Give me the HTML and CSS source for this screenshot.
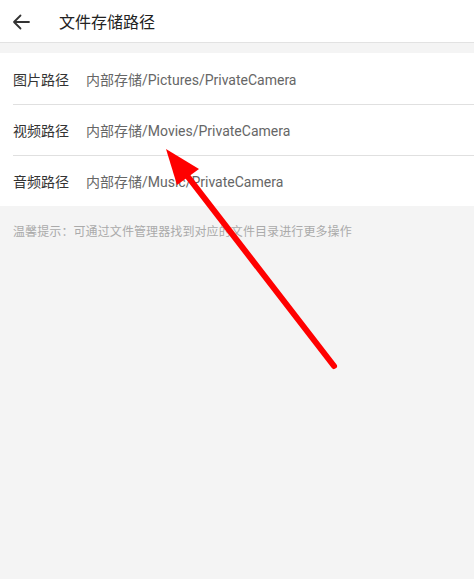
FILE: index.html
```html
<!DOCTYPE html>
<html lang="zh">
<head>
<meta charset="utf-8">
<link rel="stylesheet" href="styles.css">
</head>
<body>
<div class="page">
  <header class="topbar">
    <svg class="back" width="18" height="16" viewBox="0 0 18 16"><path d="M17 8H2M8.5 1.5L2 8l6.5 6.5" fill="none" stroke="#333" stroke-width="1.8" stroke-linecap="round" stroke-linejoin="round"/></svg>
    <span class="title">文件存储路径</span>
  </header>
  <div class="list">
    <div class="row"><span class="label">图片路径</span><span class="value">内部存储/Pictures/PrivateCamera</span></div>
    <div class="row"><span class="label">视频路径</span><span class="value">内部存储/Movies/PrivateCamera</span></div>
    <div class="row"><span class="label">音频路径</span><span class="value">内部存储/Music/PrivateCamera</span></div>
  </div>
  <p class="hint">温馨提示：可通过文件管理器找到对应的文件目录进行更多操作</p>
  <svg class="arrow" width="474" height="579" viewBox="0 0 474 579">
    <line x1="185" y1="173" x2="334" y2="366" stroke="#ff0000" stroke-width="6" stroke-linecap="round"/>
    <polygon points="166,149 199,169 177,185" fill="#ff0000"/>
  </svg>
</div>
</body>
</html>
```
FILE: styles.css
```css
html, body {
  margin: 0;
  padding: 0;
}
body {
  background: #f4f4f4;
  font-family: Roboto, "Noto Sans CJK SC", sans-serif;
}
.page {
  position: relative;
  width: 474px;
  height: 579px;
  overflow: hidden;
}
.topbar {
  height: 42px;
  background: #fff;
  border-bottom: 1px solid #e2e2e2;
  display: flex;
  align-items: center;
  padding-left: 12px;
  box-sizing: content-box;
}
.back {
  display: block;
  margin-top: 1px;
}
.title {
  margin-left: 29px;
  font-size: 16px;
  color: #222;
}
.list {
  margin-top: 10px;
  background: #fff;
}
.row {
  height: 50px;
  display: flex;
  align-items: center;
  margin-left: 13px;
  border-bottom: 1px solid #e0e0e0;
}
.row:first-child {
  height: 51px;
}
.row:last-child {
  border-bottom: none;
}
.label {
  font-size: 14px;
  color: #333;
  width: 73px;
}
.value {
  font-size: 14px;
  color: #666;
}
.hint {
  margin: 16px 0 0 13px;
  font-size: 12px;
  color: #aaa;
  letter-spacing: 0.1px;
}
.arrow {
  position: absolute;
  left: 0;
  top: 0;
  pointer-events: none;
}
```
